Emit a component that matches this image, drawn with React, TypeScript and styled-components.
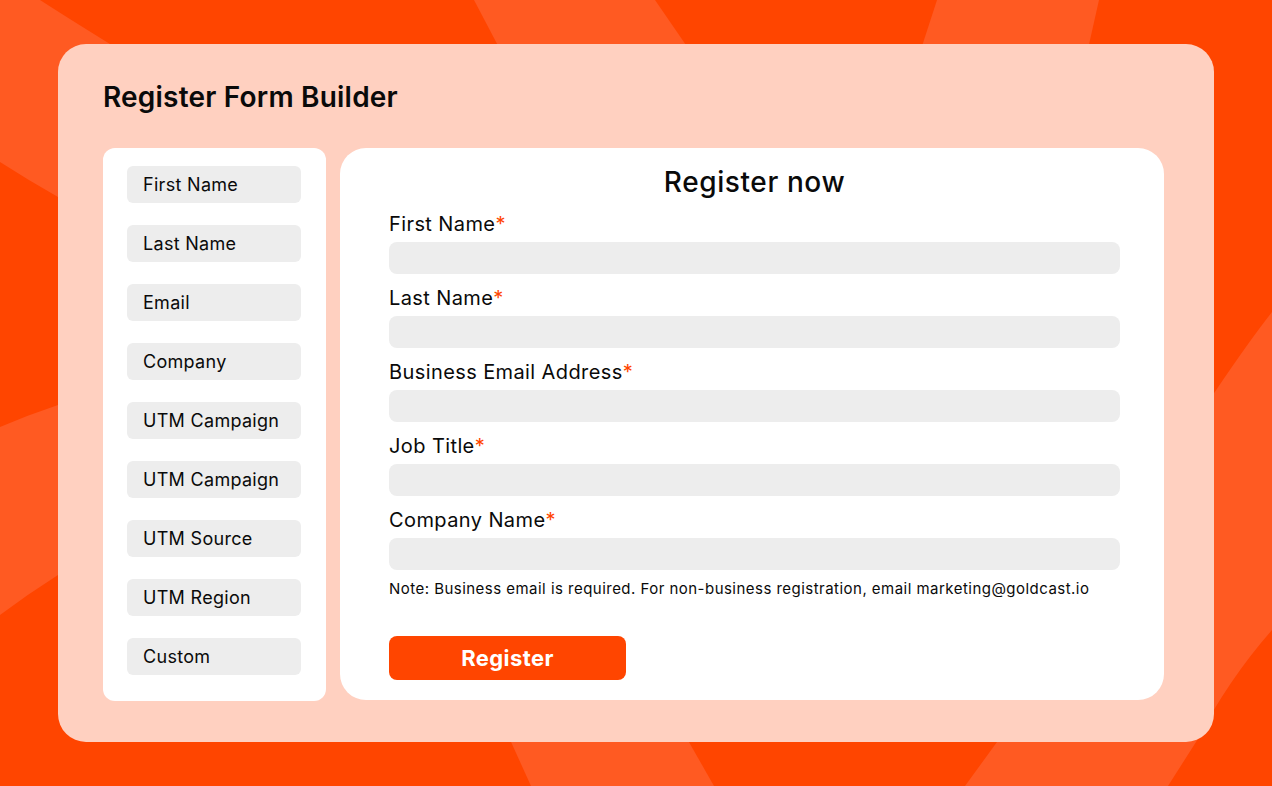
import styled, { createGlobalStyle } from 'styled-components';

const GlobalStyle = createGlobalStyle`
  html,
  body {
    margin: 0;
    padding: 0;
  }

  body {
    font-family: Inter, 'Noto Sans', 'Liberation Sans', sans-serif;
    color: #0a0a0a;
  }

  * {
    box-sizing: border-box;
  }
`;

const colors = {
  orange: '#ff4500',
  orangeLight: '#ff5a22',
  peach: '#ffd0c0',
  field: '#ededed',
  white: '#ffffff',
};

const StyledPage = styled.main`
  position: relative;
  display: flex;
  width: 100vw;
  height: 100vh;
  padding: 44px 58px;
  overflow: hidden;
  background: ${colors.orange};
`;

const StyledBackdrop = styled.svg`
  position: absolute;
  inset: 0;
  width: 100%;
  height: 100%;
  z-index: 0;
`;

const StyledCard = styled.section`
  position: relative;
  z-index: 1;
  display: flex;
  flex: 1;
  flex-direction: column;
  gap: 34px;
  padding: 36px 50px 41px 45px;
  border-radius: 28px;
  background: ${colors.peach};
`;

const StyledTitle = styled.h1`
  margin: 0;
  font-size: 28px;
  line-height: 34px;
  font-weight: 600;
  letter-spacing: 0.2px;
`;

const StyledPanels = styled.div`
  display: flex;
  flex: 1;
  gap: 14px;
  align-items: flex-start;
`;

const StyledFieldList = styled.aside`
  display: flex;
  flex-direction: column;
  gap: 22px;
  width: 223px;
  padding: 18px 25px 26px 24px;
  border-radius: 12px;
  background: ${colors.white};
`;

const StyledChip = styled.div`
  display: flex;
  align-items: center;
  height: 37px;
  padding-left: 16px;
  border-radius: 6px;
  background: ${colors.field};
  font-size: 18px;
  letter-spacing: 0.3px;
`;

const StyledForm = styled.form`
  display: flex;
  flex: 1;
  flex-direction: column;
  align-self: stretch;
  margin-bottom: 1px;
  padding: 17px 44px 20px 49px;
  border-radius: 26px;
  background: ${colors.white};
`;

const StyledFormHeading = styled.h2`
  margin: 0 0 13px;
  text-align: center;
  font-size: 28px;
  line-height: 34px;
  font-weight: 500;
  letter-spacing: 0.6px;
`;

const StyledFields = styled.div`
  display: flex;
  flex-direction: column;
  gap: 12px;
`;

const StyledField = styled.label`
  display: flex;
  flex-direction: column;
  gap: 6px;
  font-size: 20px;
  line-height: 24px;
  letter-spacing: 0.4px;
`;

const StyledRequired = styled.span`
  color: ${colors.orange};
`;

const StyledInput = styled.div`
  height: 32px;
  border-radius: 8px;
  background: ${colors.field};
`;

const StyledNote = styled.p`
  margin: 10px 0 38px;
  font-size: 15px;
  line-height: 18px;
  letter-spacing: 0.47px;
`;

const StyledButton = styled.button`
  width: 237px;
  height: 44px;
  border: none;
  border-radius: 8px;
  background: ${colors.orange};
  color: ${colors.white};
  font-family: inherit;
  font-size: 22px;
  font-weight: 700;
  letter-spacing: 0.4px;
  cursor: pointer;
`;

const chips = [
  'First Name',
  'Last Name',
  'Email',
  'Company',
  'UTM Campaign',
  'UTM Campaign',
  'UTM Source',
  'UTM Region',
  'Custom',
];

const fields = ['First Name', 'Last Name', 'Business Email Address', 'Job Title', 'Company Name'];

const Backdrop = () => (
  <StyledBackdrop viewBox="0 0 1272 786" preserveAspectRatio="none" aria-hidden>
    <g fill={colors.orangeLight}>
      <path d="M0,0 L40,0 Q130,58 400,220 L400,330 Q150,232 58,197 Q28,180 0,162 Z" />
      <path d="M0,427 Q28,415 58,405 L300,345 L300,500 Q120,540 58,575 Q28,594 0,615 Z" />
      <path d="M474,0 L655,0 L710,80 L516,80 Z" />
      <path d="M937,0 L1099,0 L1081,80 L911,80 Z" />
      <path d="M492,700 L665,700 L714,786 L531,786 Z" />
      <path d="M1272,312 Q1195,410 997,742 L965,786 L1168,786 L1196,742 Q1228,680 1272,630 Z" />
    </g>
  </StyledBackdrop>
);

export default function App() {
  return (
    <>
      <GlobalStyle />
      <StyledPage>
        <Backdrop />
        <StyledCard>
          <StyledTitle>Register Form Builder</StyledTitle>
          <StyledPanels>
            <StyledFieldList>
              {chips.map((chip, i) => (
                <StyledChip key={i}>{chip}</StyledChip>
              ))}
            </StyledFieldList>
            <StyledForm onSubmit={(e) => e.preventDefault()}>
              <StyledFormHeading>Register now</StyledFormHeading>
              <StyledFields>
                {fields.map((field) => (
                  <StyledField key={field}>
                    <span>
                      {field}
                      <StyledRequired>*</StyledRequired>
                    </span>
                    <StyledInput />
                  </StyledField>
                ))}
              </StyledFields>
              <StyledNote>
                Note: Business email is required. For non-business registration, email
                marketing@goldcast.io
              </StyledNote>
              <StyledButton type="submit">Register</StyledButton>
            </StyledForm>
          </StyledPanels>
        </StyledCard>
      </StyledPage>
    </>
  );
}
